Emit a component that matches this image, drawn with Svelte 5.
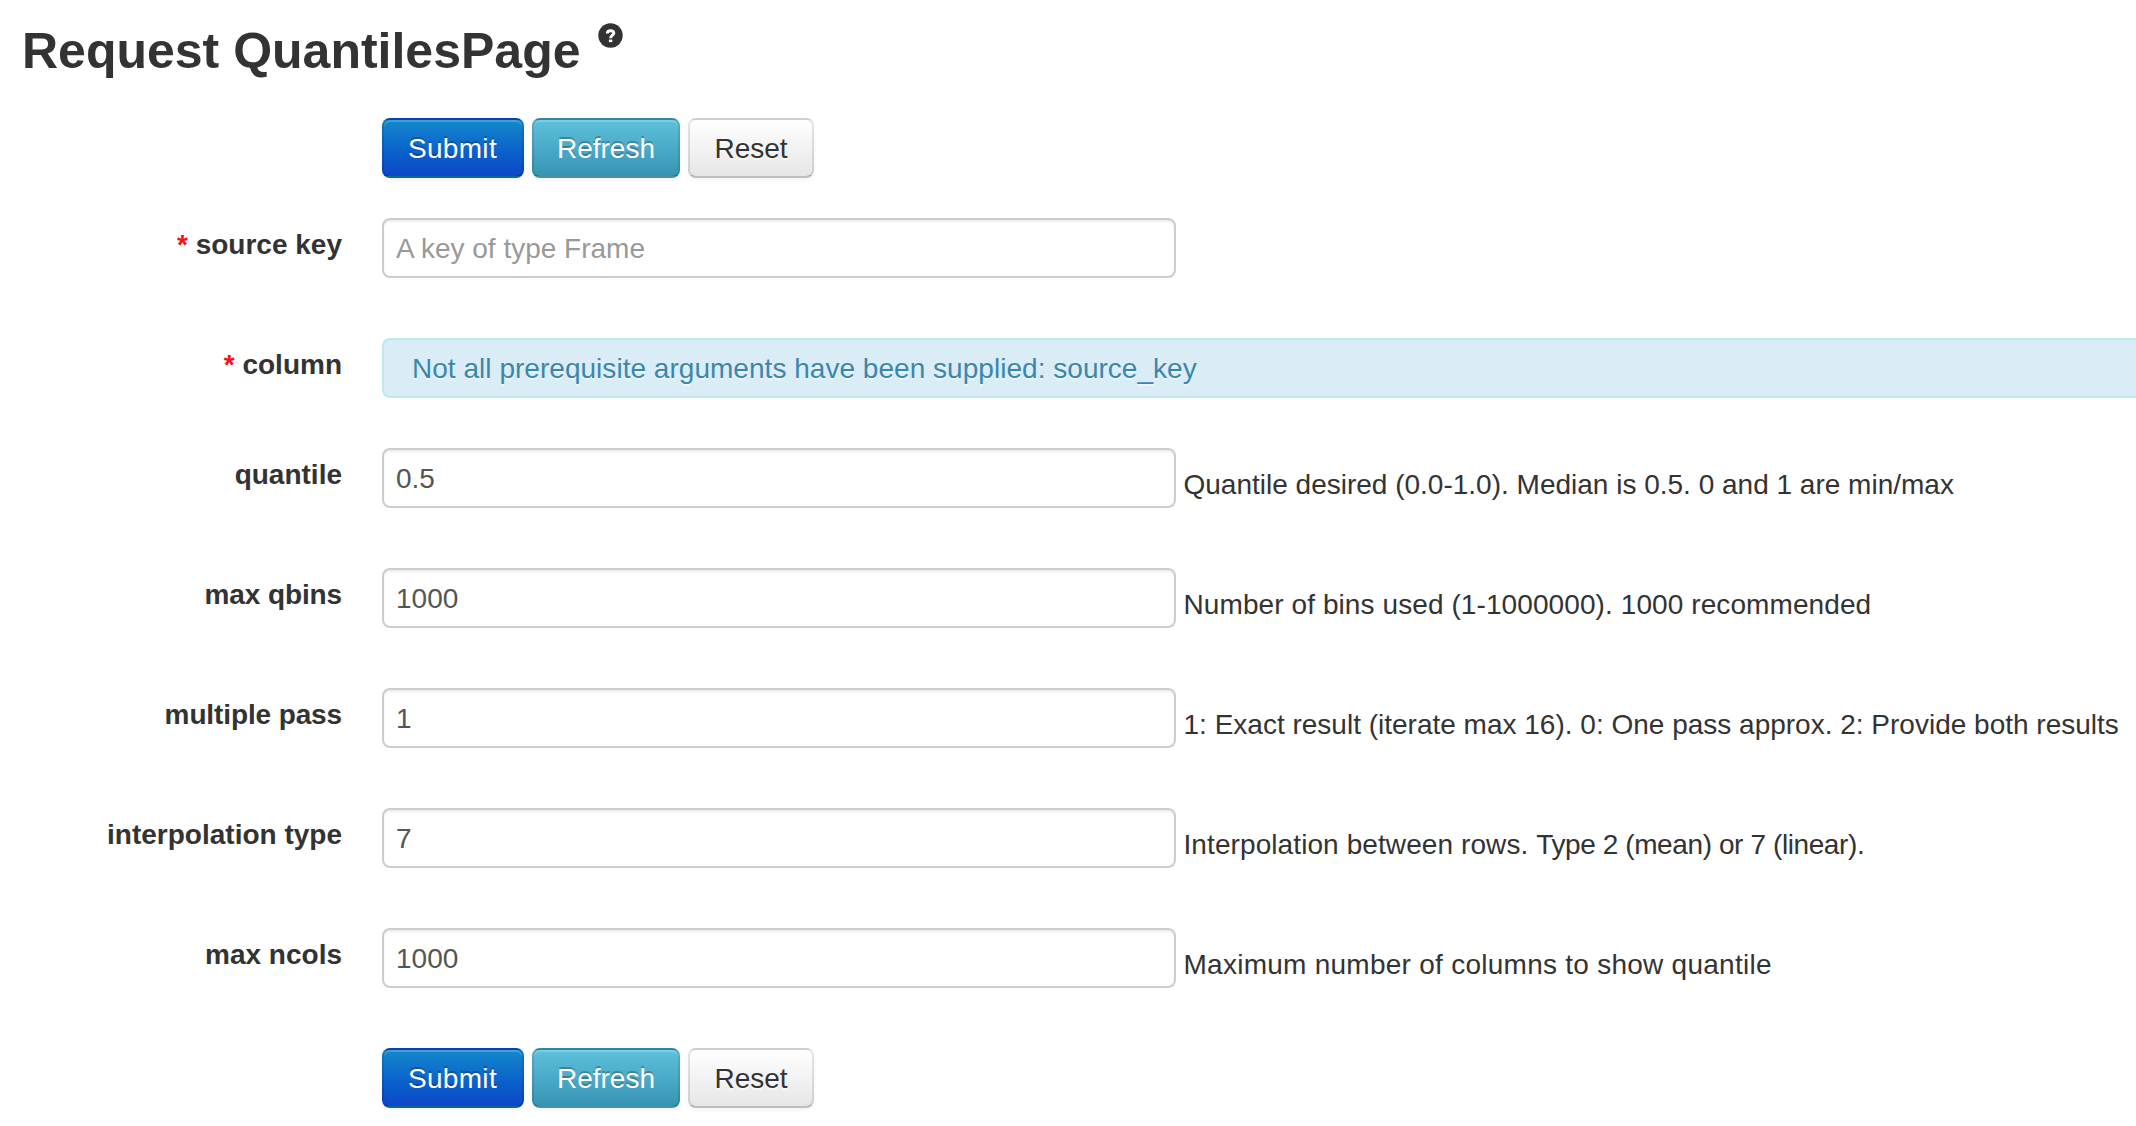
<script>
  const fields = [
    { label: 'source key', required: true, placeholder: 'A key of type Frame', value: '' },
    { label: 'column', required: true, alert: 'Not all prerequisite arguments have been supplied: source_key' },
    { label: 'quantile', value: '0.5', hint: 'Quantile desired (0.0-1.0). Median is 0.5. 0 and 1 are min/max' },
    { label: 'max qbins', track: 'tight', value: '1000', hint: 'Number of bins used (1-1000000). 1000 recommended', hintTrack: 'loose' },
    { label: 'multiple pass', track: 'tight', value: '1', hint: '1: Exact result (iterate max 16). 0: One pass approx. 2: Provide both results' },
    { label: 'interpolation type', value: '7', hint: 'Interpolation between rows. ', hintTrack: 'loose', hintTail: 'Type 2 (mean) or 7 (linear).' },
    { label: 'max ncols', value: '1000', hint: 'Maximum number of columns to show quantile', hintTrack: 'looser' }
  ];
</script>

{#snippet actions()}
  <div class="actions">
    <button type="submit" class="btn primary">Submit</button>
    <button type="button" class="btn info">Refresh</button>
    <button type="reset" class="btn plain">Reset</button>
  </div>
{/snippet}

<form class="page" onsubmit={(e) => e.preventDefault()}>
  <h2>
    Request QuantilesPage
    <svg class="help" viewBox="0 0 25 25" role="img" aria-label="Help">
      <circle cx="12.5" cy="12.5" r="12.2" fill="#333" />
      <path d="M9.3 10.4C9.3 6.9 15.8 6.9 15.8 10.1C15.8 12.3 12.6 12 12.6 15.2" fill="none" stroke="#fff" stroke-width="3" />
      <rect x="10.9" y="16.6" width="3.4" height="2.5" fill="#fff" />
    </svg>
  </h2>

  {@render actions()}

  {#each fields as f, i}
    <div class="row" class:notice={f.alert}>
      <label for="field-{i}" class={f.track}>
        {#if f.required}<span class="star">*</span>{/if}
        {f.label}
      </label>
      {#if f.alert}
        <div class="alert">{f.alert}</div>
      {:else}
        <input id="field-{i}" type="text" value={f.value} placeholder={f.placeholder} />
      {/if}
      {#if f.hint}
        <span class="hint {f.hintTrack ?? ''}">{f.hint}{#if f.hintTail}<span class="tail">{f.hintTail}</span>{/if}</span>
      {/if}
    </div>
  {/each}

  {@render actions()}
</form>

<style>
  :global(body) {
    background: #fff;
    overflow: hidden;
  }
  .page {
    box-sizing: border-box;
    width: 100%;
    height: 1126px;
    overflow: hidden;
    color: #333;
    font: 28px/40px 'Liberation Sans', Arial, sans-serif;
  }
  h2 {
    display: flex;
    align-items: flex-start;
    gap: 17px;
    height: 97px;
    margin: 0;
    padding: 21px 0 0 22px;
    box-sizing: content-box;
    font-size: 50px;
    line-height: 61px;
  }
  .help {
    width: 25px;
    height: 25px;
    margin-top: 2px;
  }
  .actions {
    display: flex;
    gap: 8px;
    height: 60px;
    padding-left: 382px;
    margin-bottom: 40px;
  }
  .btn {
    box-sizing: border-box;
    height: 60px;
    padding: 2px 0 0;
    border: 2px solid;
    border-color: rgba(0, 0, 0, 0.1) rgba(0, 0, 0, 0.1) rgba(0, 0, 0, 0.25);
    border-radius: 8px;
    font: inherit;
    line-height: 54px;
    box-shadow: inset 0 2px 0 rgba(255, 255, 255, 0.2), 0 2px 4px rgba(0, 0, 0, 0.05);
  }
  .primary {
    width: 142px;
    padding-right: 1px;
    color: #fff;
    letter-spacing: 0.3px;
    text-shadow: 0 -2px 0 rgba(0, 0, 0, 0.25);
    background: #006dcc linear-gradient(#1488cb, #0a5fcc 60%, #0d47c8);
  }
  .info {
    width: 148px;
    color: #fff;
    text-shadow: 0 -2px 0 rgba(0, 0, 0, 0.25);
    background: #49afcd linear-gradient(#5fc0dc, #3595b3);
  }
  .plain {
    width: 126px;
    color: #333;
    text-shadow: 0 2px 2px rgba(255, 255, 255, 0.75);
    background: #f5f5f5 linear-gradient(#fff, #e6e6e6);
  }
  .row {
    display: flex;
    align-items: flex-start;
    height: 60px;
    margin-bottom: 60px;
  }
  .notice {
    margin-bottom: 50px;
  }
  label {
    box-sizing: border-box;
    width: 342px;
    margin-right: 40px;
    padding-top: 7px;
    flex: none;
    text-align: right;
    font-weight: bold;
  }
  .star {
    color: #fc0d1b;
  }
  .tight {
    letter-spacing: -0.12px;
  }
  .loose {
    letter-spacing: 0.09px;
  }
  .looser {
    letter-spacing: 0.26px;
  }
  .tail {
    letter-spacing: -0.4px;
  }
  input {
    box-sizing: border-box;
    width: 794px;
    height: 60px;
    flex: none;
    margin: 0;
    padding: 2px 12px 0;
    border: 2px solid #ccc;
    border-radius: 8px;
    outline: 0;
    background: #fff;
    box-shadow: inset 0 2px 2px rgba(0, 0, 0, 0.075);
    color: #555;
    font: inherit;
  }
  input::placeholder {
    color: #999;
    opacity: 1;
  }
  .hint {
    margin-left: 7.5px;
    padding-top: 17px;
    white-space: pre;
  }
  .alert {
    box-sizing: border-box;
    flex: 1;
    height: 60px;
    padding: 9px 28px 7px;
    border: 2px solid #bce8f1;
    border-right: 0;
    border-radius: 8px 0 0 8px;
    background: #daecf6;
    color: #3a87ad;
    letter-spacing: 0.03px;
    text-shadow: 0 2px 0 rgba(255, 255, 255, 0.5);
    white-space: nowrap;
  }
</style>
